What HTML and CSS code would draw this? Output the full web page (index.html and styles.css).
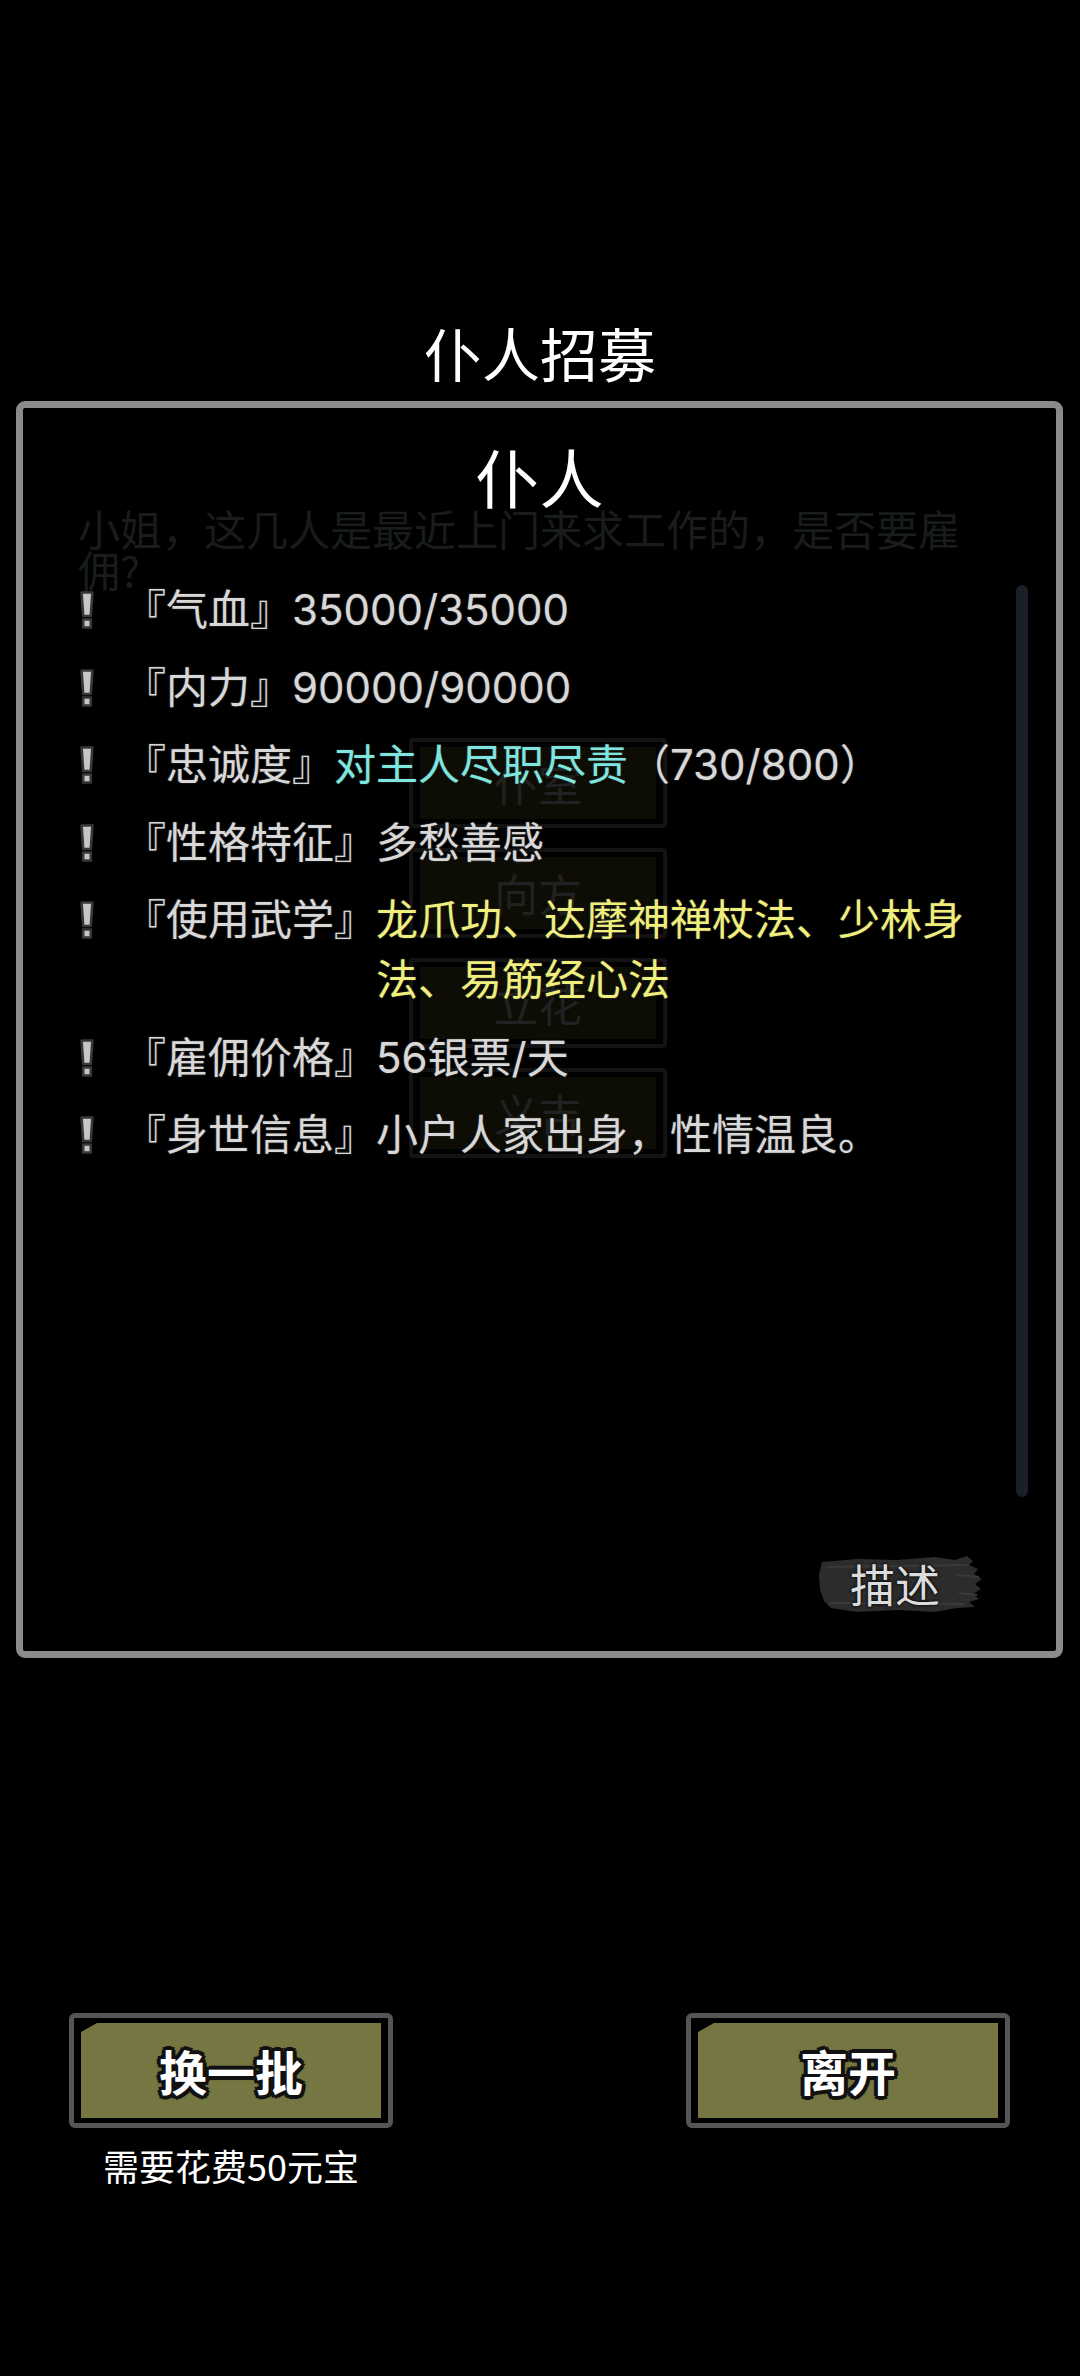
FILE: index.html
```html
<!DOCTYPE html>
<html lang="zh-CN">
<head>
<meta charset="utf-8">
<title>仆人招募</title>
<link rel="stylesheet" href="styles.css">
</head>
<body>
<div class="screen">
  <h1 class="title">仆人招募</h1>
  <section class="panel">
    <div class="underlay" aria-hidden="true">
      <p class="prompt">小姐，这几人是最近上门来求工作的，是否要雇佣?</p>
      <div class="ghosts">
        <div class="ghost"><span>仆室</span></div>
        <div class="ghost"><span>向方</span></div>
        <div class="ghost"><span>立花</span></div>
        <div class="ghost"><span>义吉</span></div>
      </div>
    </div>
    <h2 class="heading">仆人</h2>
    <div class="scroll">
      <ul class="attrs">
        <li class="attr">
          <svg class="bang" viewBox="0 0 16 40" width="16" height="40"><path d="M2.6 2.5 H13.4 L11.8 26 H4.2 Z" fill="#c6c6c6" stroke="#383838" stroke-width="2.6" stroke-linejoin="round"/><rect x="4.2" y="29.5" width="7.6" height="8" fill="#c6c6c6" stroke="#383838" stroke-width="2.6" stroke-linejoin="round"/></svg>
          <span class="label">『气血』</span><span class="value">35000/35000</span>
        </li>
        <li class="attr">
          <svg class="bang" viewBox="0 0 16 40" width="16" height="40"><path d="M2.6 2.5 H13.4 L11.8 26 H4.2 Z" fill="#c6c6c6" stroke="#383838" stroke-width="2.6" stroke-linejoin="round"/><rect x="4.2" y="29.5" width="7.6" height="8" fill="#c6c6c6" stroke="#383838" stroke-width="2.6" stroke-linejoin="round"/></svg>
          <span class="label">『内力』</span><span class="value">90000/90000</span>
        </li>
        <li class="attr">
          <svg class="bang" viewBox="0 0 16 40" width="16" height="40"><path d="M2.6 2.5 H13.4 L11.8 26 H4.2 Z" fill="#c6c6c6" stroke="#383838" stroke-width="2.6" stroke-linejoin="round"/><rect x="4.2" y="29.5" width="7.6" height="8" fill="#c6c6c6" stroke="#383838" stroke-width="2.6" stroke-linejoin="round"/></svg>
          <span class="label">『忠诚度』</span><span class="value"><span class="cyan">对主人尽职尽责</span>（730/800）</span>
        </li>
        <li class="attr">
          <svg class="bang" viewBox="0 0 16 40" width="16" height="40"><path d="M2.6 2.5 H13.4 L11.8 26 H4.2 Z" fill="#c6c6c6" stroke="#383838" stroke-width="2.6" stroke-linejoin="round"/><rect x="4.2" y="29.5" width="7.6" height="8" fill="#c6c6c6" stroke="#383838" stroke-width="2.6" stroke-linejoin="round"/></svg>
          <span class="label">『性格特征』</span><span class="value">多愁善感</span>
        </li>
        <li class="attr">
          <svg class="bang" viewBox="0 0 16 40" width="16" height="40"><path d="M2.6 2.5 H13.4 L11.8 26 H4.2 Z" fill="#c6c6c6" stroke="#383838" stroke-width="2.6" stroke-linejoin="round"/><rect x="4.2" y="29.5" width="7.6" height="8" fill="#c6c6c6" stroke="#383838" stroke-width="2.6" stroke-linejoin="round"/></svg>
          <span class="label">『使用武学』</span><span class="value yellow">龙爪功、达摩神禅杖法、少林身法、易筋经心法</span>
        </li>
        <li class="attr">
          <svg class="bang" viewBox="0 0 16 40" width="16" height="40"><path d="M2.6 2.5 H13.4 L11.8 26 H4.2 Z" fill="#c6c6c6" stroke="#383838" stroke-width="2.6" stroke-linejoin="round"/><rect x="4.2" y="29.5" width="7.6" height="8" fill="#c6c6c6" stroke="#383838" stroke-width="2.6" stroke-linejoin="round"/></svg>
          <span class="label">『雇佣价格』</span><span class="value">56银票/天</span>
        </li>
        <li class="attr">
          <svg class="bang" viewBox="0 0 16 40" width="16" height="40"><path d="M2.6 2.5 H13.4 L11.8 26 H4.2 Z" fill="#c6c6c6" stroke="#383838" stroke-width="2.6" stroke-linejoin="round"/><rect x="4.2" y="29.5" width="7.6" height="8" fill="#c6c6c6" stroke="#383838" stroke-width="2.6" stroke-linejoin="round"/></svg>
          <span class="label">『身世信息』</span><span class="value">小户人家出身，性情温良。</span>
        </li>
      </ul>
      <div class="scrollbar"></div>
    </div>
    <div class="badge-row">
      <div class="badge">
        <svg class="brush" viewBox="0 0 166 58" width="166" height="58" aria-hidden="true">
          <path d="M5 7 L40 4 L80 5 L118 2 L138 5 L150 1 L156 6 L152 10 L161 14 L157 19 L165 24 L158 29 L164 34 L156 39 L162 44 L152 47 L158 52 L140 53 L118 57 L80 55 L40 57 L14 53 L7 46 L3 34 L2 20 Z" fill="#2c2c2c"/>
          <path d="M10 12 L150 10 M12 48 L148 49 M140 20 L162 22 M142 38 L160 40" stroke="#3a3a3a" stroke-width="2" fill="none"/>
        </svg>
        <span class="badge-text">描述</span>
      </div>
    </div>
  </section>
  <div class="actions">
    <div class="action">
      <button class="btn"><span class="btn-face">换一批</span></button>
      <p class="cost">需要花费50元宝</p>
    </div>
    <div class="action">
      <button class="btn"><span class="btn-face">离开</span></button>
    </div>
  </div>
</div>
</body>
</html>
```

FILE: styles.css
```css
html, body {
  margin: 0;
  padding: 0;
  background: #000;
}

body {
  width: 1080px;
  height: 2376px;
  overflow: hidden;
  font-family: "Noto Sans CJK SC", "Noto Sans", sans-serif;
  color: #fff;
}

.screen {
  width: 1080px;
  padding-top: 312px;
}

.title {
  margin: 0;
  font-size: 58px;
  line-height: 80px;
  font-weight: 400;
  text-align: center;
  color: #fff;
}

.panel {
  position: relative;
  box-sizing: border-box;
  margin: 9px 0 0 16px;
  width: 1047px;
  height: 1257px;
  border: 7px solid #8b8b8b;
  border-radius: 9px;
  background: #000;
  padding-top: 27px;
  display: flex;
  flex-direction: column;
}

.underlay {
  position: absolute;
  left: 0;
  top: 0;
  right: 0;
  bottom: 0;
  z-index: 0;
}

.prompt {
  position: absolute;
  left: 55px;
  top: 99px;
  width: 900px;
  margin: 0;
  font-size: 42px;
  line-height: 41px;
  color: #181c1c;
}

.ghosts {
  position: absolute;
  left: 386px;
  top: 330px;
  display: flex;
  flex-direction: column;
  gap: 20px;
}

.ghost {
  box-sizing: border-box;
  width: 258px;
  height: 90px;
  border: 4px solid #131313;
  border-radius: 4px;
  padding: 5px 7px;
  display: flex;
}

.ghost span {
  flex: 1;
  background: #0d0d06;
  display: flex;
  align-items: center;
  justify-content: center;
  font-size: 44px;
  color: #212121;
}

.heading {
  position: relative;
  z-index: 1;
  margin: 0;
  font-size: 64px;
  line-height: 80px;
  font-weight: 400;
  text-align: center;
  color: #fff;
}

.scroll {
  position: relative;
  z-index: 1;
  display: flex;
  margin-top: 65px;
}

.attrs {
  flex: 1;
  list-style: none;
  margin: 0;
  padding: 0 0 0 56px;
  display: flex;
  flex-direction: column;
  gap: 17.5px;
}

.attr {
  display: flex;
  align-items: flex-start;
  font-family: "Inter", "Noto Sans CJK SC", sans-serif;
  font-size: 42px;
  line-height: 60px;
  color: #d8d8d8;
  text-shadow: 0 0 2px #2a2a2a, 0 0 2px #2a2a2a, 0 0 1px #333;
}

.bang {
  flex: none;
  margin-top: 10px;
  margin-right: 29px;
}

.label {
  white-space: nowrap;
  flex: none;
}

.value {
  flex: 1;
  min-width: 0;
}

.cyan {
  color: #7de6df;
}

.yellow {
  color: #f0ef7c;
}

.scrollbar {
  flex: none;
  width: 12px;
  height: 912px;
  margin: 5px 28px 0 16px;
  border-radius: 6px;
  background: #1b1f28;
}

.badge-row {
  position: relative;
  z-index: 1;
  display: flex;
  justify-content: flex-end;
  margin-top: 58px;
  padding-right: 73px;
}

.badge {
  position: relative;
  width: 166px;
  height: 58px;
  display: flex;
  align-items: center;
  justify-content: center;
}

.brush {
  position: absolute;
  left: 0;
  top: 0;
}

.badge-text {
  position: relative;
  margin-right: 10px;
  font-size: 45px;
  line-height: 58px;
  color: #dcdcdc;
  text-shadow: 0 0 3px #111, 0 0 3px #111, 0 0 2px #111;
}

.actions {
  display: flex;
  justify-content: space-between;
  align-items: flex-start;
  margin-top: 355px;
  padding: 0 70px 0 69px;
}

.action {
  display: flex;
  flex-direction: column;
  align-items: center;
}

.btn {
  box-sizing: border-box;
  width: 324px;
  height: 115px;
  margin: 0;
  padding: 5px 7px;
  border: 5px solid #555;
  border-radius: 6px;
  background: #000;
  display: flex;
  cursor: pointer;
  font-family: inherit;
}

.btn-face {
  flex: 1;
  background: #767643;
  clip-path: polygon(0 9px, 16px 0, 100% 0, 100% 100%, 0 100%);
  display: flex;
  align-items: center;
  justify-content: center;
  font-size: 48px;
  line-height: 95px;
  font-weight: 700;
  color: #fff;
  text-shadow:
    -3px -3px 0 #111, 3px -3px 0 #111, -3px 3px 0 #111, 3px 3px 0 #111,
    0 -4px 0 #111, 0 4px 0 #111, -4px 0 0 #111, 4px 0 0 #111,
    0 0 5px #111;
}

.cost {
  margin: 16px 0 0;
  font-size: 36px;
  line-height: 42px;
  color: #fff;
}
```
